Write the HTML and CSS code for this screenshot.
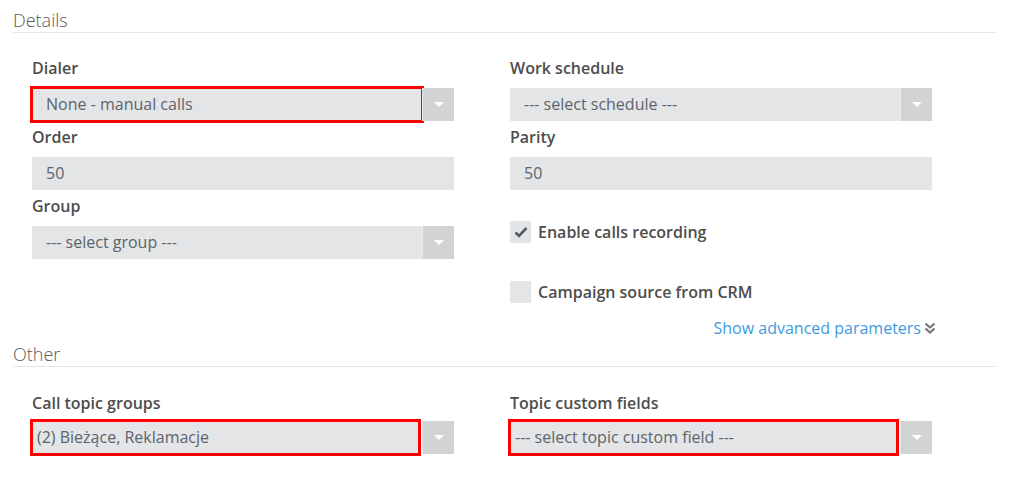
FILE: index.html
```html
<!DOCTYPE html>
<html>
  <head>
    <title>Campaign settings</title>
    <link rel="stylesheet" href="styles.css">
  </head>
  <body>
    <div class="panel">
      <h3 class="section-title first">Details</h3>

      <div class="form-grid">
        <div class="column">
          <div class="field">
            <label class="field-label">Dialer</label>
            <div class="select">
              <div class="select-value marked">None - manual calls</div>
              <div class="select-arrow"><span class="caret"></span></div>
            </div>
          </div>
          <div class="field">
            <label class="field-label">Order</label>
            <div class="input">50</div>
          </div>
          <div class="field">
            <label class="field-label">Group</label>
            <div class="select">
              <div class="select-value">--- select group ---</div>
              <div class="select-arrow"><span class="caret"></span></div>
            </div>
          </div>
        </div>

        <div class="column">
          <div class="field">
            <label class="field-label">Work schedule</label>
            <div class="select">
              <div class="select-value">--- select schedule ---</div>
              <div class="select-arrow"><span class="caret"></span></div>
            </div>
          </div>
          <div class="field">
            <label class="field-label">Parity</label>
            <div class="input">50</div>
          </div>

          <div class="check-row first-check">
            <span class="checkbox">
              <svg width="14" height="12" viewBox="0 0 14 12"><path d="M1.5 6.5 L5 10 L12.5 2" fill="none" stroke="#555b61" stroke-width="2.6"/></svg>
            </span>
            <span class="check-label">Enable calls recording</span>
          </div>
          <div class="check-row second-check">
            <span class="checkbox"></span>
            <span class="check-label">Campaign source from CRM</span>
          </div>

          <div class="advanced">
            <a class="advanced-link" href="#">Show advanced parameters</a>
            <svg class="chevrons" width="12" height="12" viewBox="0 0 12 12"><path d="M1.5 1.5 L6 5.5 L10.5 1.5 M1.5 6.5 L6 10.5 L10.5 6.5" fill="none" stroke="#777" stroke-width="2.3"/></svg>
          </div>
        </div>
      </div>

      <h3 class="section-title">Other</h3>

      <div class="form-grid other">
        <div class="column">
          <div class="field">
            <label class="field-label topic">Call topic groups</label>
            <div class="select">
              <div class="select-value marked tight">(2) Bieżące, Reklamacje</div>
              <div class="select-arrow"><span class="caret"></span></div>
            </div>
          </div>
        </div>
        <div class="column">
          <div class="field">
            <label class="field-label topic">Topic custom fields</label>
            <div class="select">
              <div class="select-value marked tight">--- select topic custom field ---</div>
              <div class="select-arrow"><span class="caret"></span></div>
            </div>
          </div>
        </div>
      </div>
    </div>
  </body>
</html>
```

FILE: styles.css
```css
body{
  margin: 0;
  background-color: #fff;
  font-family: "Open Sans", "Liberation Sans", sans-serif;
  color: #4f4f4f;
}

.panel{
  padding: 0 13px;
}

.section-title{
  margin: 4px 0 0 0;
  font-size: 18px;
  font-weight: 300;
  line-height: 24px;
  color: #5a5a5a;
  border-bottom: 1px solid #e6e6e6;
}
.section-title.first{
  margin-top: 8px;
}

.form-grid{
  display: grid;
  grid-template-columns: 422px 422px;
  column-gap: 56px;
  padding-left: 19px;
  margin-top: 25px;
}
.form-grid.other{
  margin-top: 26px;
}

.field{
  margin-bottom: 6px;
}

.field-label{
  display: block;
  font-size: 16px;
  font-weight: 600;
  line-height: 21px;
  margin-bottom: 9px;
  color: #4d4d4d;
}
.field-label.topic{
  margin-bottom: 7px;
}

.input{
  height: 33px;
  line-height: 33px;
  padding-left: 14px;
  background-color: #e3e5e6;
  font-size: 16px;
  color: #5b646d;
}

.select{
  display: flex;
  height: 33px;
}
.select-value{
  flex: 1;
  line-height: 33px;
  padding-left: 14px;
  background-color: #e3e5e6;
  font-size: 16px;
  color: #5b646d;
  white-space: nowrap;
}
.select-value.marked{
  outline: 3px solid #ff0000;
  outline-offset: -1px;
}
.select-value.tight{
  padding-left: 5px;
  margin-right: 3px;
}
.select-arrow{
  width: 31px;
  border-left: 1px solid #e9eaeb;
  background-color: #d2d3d4;
  display: flex;
  align-items: center;
  justify-content: center;
}
.caret{
  width: 0;
  height: 0;
  border-left: 5px solid transparent;
  border-right: 5px solid transparent;
  border-top: 5px solid #fff;
}

.check-row{
  display: flex;
  align-items: center;
  height: 22px;
}
.first-check{
  margin-top: 31px;
}
.second-check{
  margin-top: 38px;
}
.checkbox{
  width: 21px;
  height: 22px;
  background-color: #e3e5e6;
  display: flex;
  align-items: center;
  justify-content: center;
}
.check-label{
  margin-left: 7px;
  font-size: 16px;
  font-weight: 600;
  color: #4d4d4d;
}

.advanced{
  display: flex;
  justify-content: flex-end;
  align-items: center;
  margin-top: 15px;
  margin-right: -4px;
  line-height: 20px;
}
.advanced-link{
  font-size: 16px;
  color: #3d9be0;
  text-decoration: none;
}
.chevrons{
  margin-left: 3px;
}
```
